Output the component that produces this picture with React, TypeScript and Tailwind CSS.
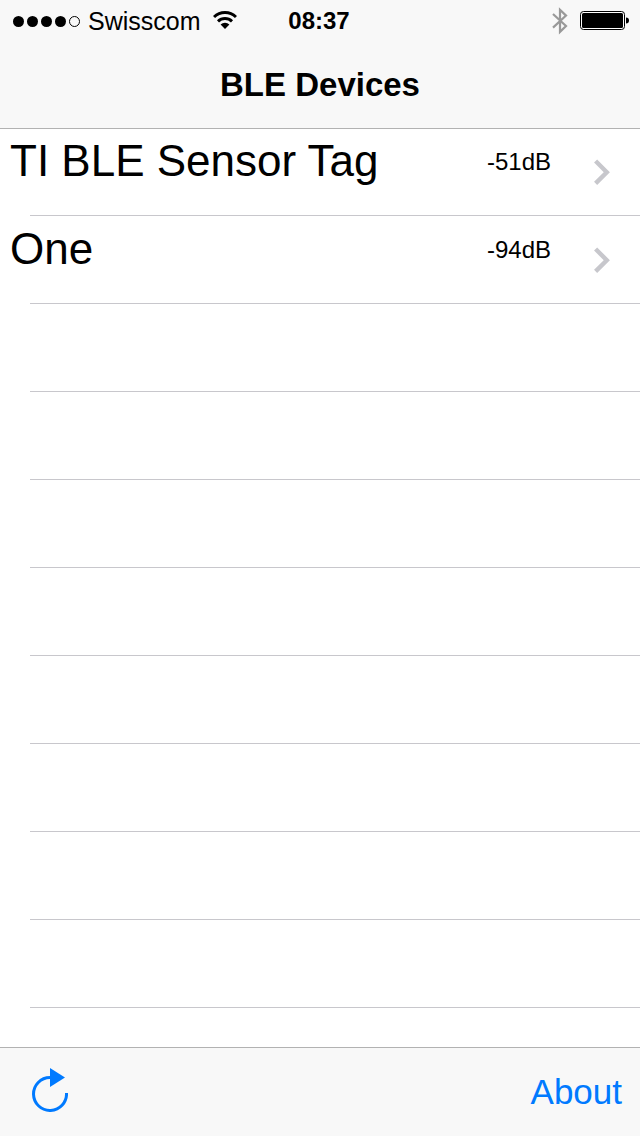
type Device = {
  name: string;
  rssi: number;
};

const devices: Device[] = [
  { name: 'TI BLE Sensor Tag', rssi: -51 },
  { name: 'One', rssi: -94 },
];

const ROW_COUNT = 10;

function SignalDots() {
  return (
    <div className="flex gap-[3px]" role="img" aria-label="Signal 4 of 5">
      <span className="size-[11px] rounded-full bg-black" />
      <span className="size-[11px] rounded-full bg-black" />
      <span className="size-[11px] rounded-full bg-black" />
      <span className="size-[11px] rounded-full bg-black" />
      <span className="size-[11px] rounded-full border border-black" />
    </div>
  );
}

function WifiIcon() {
  return (
    <svg className="ml-1 h-5 w-6 shrink-0" viewBox="0 0 24 20" fill="none" stroke="#000" aria-hidden="true">
      <path d="M1 6a15.8 15.8 0 0 1 22 0" strokeWidth="3" />
      <path d="M5 10.4a10.2 10.2 0 0 1 14 0" strokeWidth="3" />
      <path d="M12 18 7.6 13.6a6.2 6.2 0 0 1 8.8 0z" fill="#000" stroke="none" />
    </svg>
  );
}

function BluetoothIcon() {
  return (
    <svg className="h-7 w-4" viewBox="0 0 16 28" fill="none" stroke="#999" strokeWidth="2.2" aria-hidden="true">
      <path d="M1 7 14 19 8 24.8V2.8L14 8.6 1 20.6" />
    </svg>
  );
}

function BatteryIcon() {
  return (
    <svg className="h-5 w-[49px]" viewBox="0 0 49 20" aria-hidden="true">
      <rect x="0.5" y="0.5" width="44" height="18" rx="3" fill="#fff" stroke="#000" />
      <rect x="2" y="2" width="41" height="15" rx="1.5" />
      <path d="M46 6.5c2 0 3 1.3 3 3s-1 3-3 3z" />
    </svg>
  );
}

function Chevron() {
  return (
    <svg className="h-[26px] w-4" viewBox="0 0 16 26" fill="none" stroke="#c7c7cc" strokeWidth="4.4" aria-hidden="true">
      <path d="M1.6 2 12.8 13.2 1.6 24.4" />
    </svg>
  );
}

function RefreshIcon() {
  return (
    <svg className="h-11 w-9" viewBox="0 0 36 44" aria-hidden="true">
      <path d="M34.5 25A16.5 16.5 0 1 1 18 9.5" fill="none" stroke="currentColor" strokeWidth="3" />
      <path d="M18 0v19l15-9.5z" fill="currentColor" />
    </svg>
  );
}

function DeviceRow({ device }: { device: Device }) {
  return (
    <a href="#device" className="flex h-full items-center pr-[30px] pl-[10px]">
      <span className="flex flex-1 self-start pt-[11px]">
        <span className="flex-1 text-[44px] leading-11">{device.name}</span>
        <span className="w-[107px] text-2xl leading-[46px]">{device.rssi}dB</span>
      </span>
      <Chevron />
    </a>
  );
}

export default function App() {
  return (
    <div className="flex min-h-screen flex-col bg-white font-['Liberation_Sans',Arial,sans-serif] text-black">
      <header className="relative h-32 bg-[#f8f8f8] shadow-[0_1px_0_#b2b2b2]">
        {/* Status bar */}
        <div className="flex h-[42px] items-center justify-between pr-[11px] pl-[13px] leading-[42px]">
          <div className="flex flex-1 items-center gap-2">
            <SignalDots />
            <span className="text-[25px]">Swisscom</span>
            <WifiIcon />
          </div>
          <span className="pr-1 text-2xl font-bold">08:37</span>
          <div className="flex flex-1 items-center justify-end gap-3">
            <BluetoothIcon />
            <BatteryIcon />
          </div>
        </div>
        <h1 className="text-center text-[33px] leading-[86px] font-bold">BLE Devices</h1>
      </header>

      {/* Device list */}
      <main className="flex-1">
        <ul>
          {Array.from({ length: ROW_COUNT }, (_, i) => (
            <li key={i} className="flex h-[88px] flex-col">
              <div className="flex-1">{devices[i] && <DeviceRow device={devices[i]} />}</div>
              <div className="ml-[30px] h-px bg-[#c8c7cc]" />
            </li>
          ))}
        </ul>
      </main>

      {/* Toolbar */}
      <footer className="flex h-[89px] items-center justify-between border-t border-[#b2b2b2] bg-[#f8f8f8] pr-[18px] pl-8 text-[#007aff]">
        <button type="button" aria-label="Refresh" className="pb-1">
          <RefreshIcon />
        </button>
        <button type="button" className="text-[35px] leading-11">
          About
        </button>
      </footer>
    </div>
  );
}
